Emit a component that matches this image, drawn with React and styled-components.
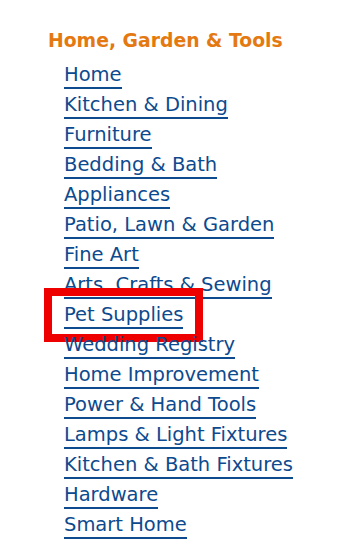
import React from "react"
import styled, { createGlobalStyle } from "styled-components"

const links = [
  "Home",
  "Kitchen & Dining",
  "Furniture",
  "Bedding & Bath",
  "Appliances",
  "Patio, Lawn & Garden",
  "Fine Art",
  "Arts, Crafts & Sewing",
  "Pet Supplies",
  "Wedding Registry",
  "Home Improvement",
  "Power & Hand Tools",
  "Lamps & Light Fixtures",
  "Kitchen & Bath Fixtures",
  "Hardware",
  "Smart Home",
]

const GlobalStyle = createGlobalStyle`
  html, body {
    margin: 0;
    padding: 0;
    background: #ffffff;
  }
  body {
    font-family: "DejaVu Sans", Verdana, sans-serif;
  }
`

const Page = styled.div`
  position: relative;
  width: 355px;
  height: 559px;
  padding: 27px 0 0 48px;
  box-sizing: border-box;
`

const Heading = styled.h2`
  margin: 0 0 5px;
  font-size: 18.8px;
  font-weight: bold;
  line-height: 28px;
  color: #e47911;
`

const List = styled.ul`
  list-style: none;
  margin: 0;
  padding: 0 0 0 16px;
`

const Item = styled.li`
  position: relative;
  height: 30px;
  line-height: 30px;
`

const Link = styled.a`
  font-size: 19.5px;
  color: #0d4a8e;
  text-decoration: none;
  border-bottom: 2px solid #0d4a8e;
  padding-bottom: 1px;
`

const Highlight = styled.span`
  position: absolute;
  left: -20px;
  top: -12px;
  width: 159px;
  height: 54px;
  border: 8px solid #ee0000;
  box-sizing: border-box;
  pointer-events: none;
`

export default function App() {
  return (
    <>
      <GlobalStyle />
      <Page>
        <Heading>Home, Garden &amp; Tools</Heading>
        <List>
          {links.map(label => (
            <Item key={label}>
              <Link href="#">{label}</Link>
              {label === "Pet Supplies" && <Highlight />}
            </Item>
          ))}
        </List>
      </Page>
    </>
  )
}
